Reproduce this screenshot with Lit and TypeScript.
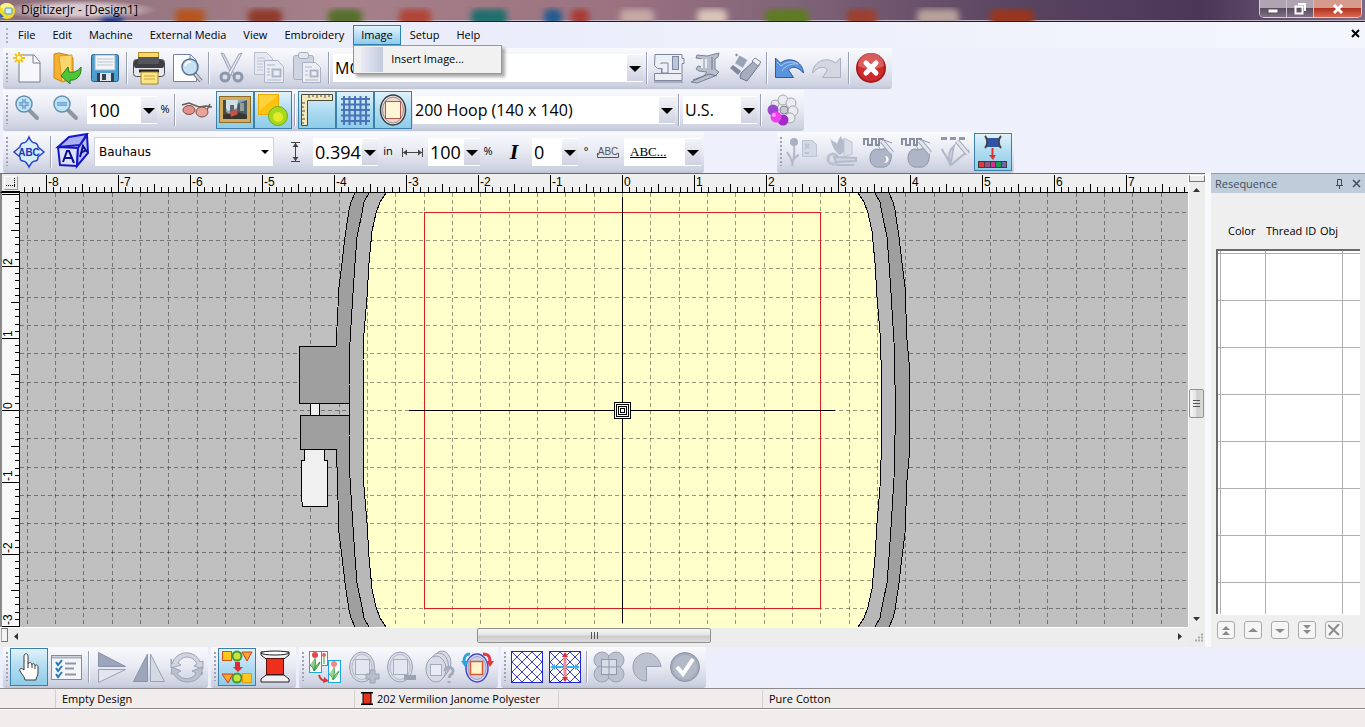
import { LitElement, html, svg, css, nothing, TemplateResult } from "lit";
import { customElement, state } from "lit/decorators.js";
import { classMap } from "lit/directives/class-map.js";

type Art = ReturnType<typeof svg>;

const G = "#9aa2b6";
const GL = "#d5d9e6";

/* ---------- toolbar icons, all drawn on a 38 x 38 field ---------- */
const icons: Record<string, Art> = {
  newDoc: svg`<path d="M9 6h15l6 7v20H9z" fill="#f6f7fb" stroke="#777c88"/><path d="M23 6v8h7" fill="#fff" stroke="#777c88"/>
    <g stroke="#f0c419" stroke-width="2"><path d="M9 3v4M9 11v4M3 9h4M11 9h4M5 5l3 3M10 10l3 3M13 5l-3 3M8 10l-3 3"/></g><circle cx="9" cy="9" r="2" fill="#fff6b0"/>`,
  open: svg`<path d="M6 5l5-1 9 2 5 3v20l-10 4-9-4z" fill="#f7b030" stroke="#c98413"/><path d="M11 7l13-1v22l-10 5z" fill="#fcd56b" stroke="#d99a20"/>
    <path d="M33 18c1 9-5 14-11 13v4l-9-8 7-9 1 5c5 1 9-1 12-5z" fill="#4fc436" stroke="#23801a"/>`,
  save: svg`<rect x="5.500" y="5.500" width="27" height="27" rx="2" fill="#4b9fd2" stroke="#2b5f8c"/><rect x="9" y="6" width="20" height="15" fill="#f2f5f8" stroke="#9db4c6"/>
    <path d="M11 10h16M11 13h16M11 16h16" stroke="#b9c4cf"/><rect x="11" y="24" width="17" height="9" fill="#38404a"/><rect x="14" y="24" width="11" height="8" fill="#dfe5ea"/><rect x="16" y="25" width="4" height="6" fill="#38404a"/>`,
  print: svg`<rect x="8.500" y="3.500" width="20" height="10" fill="#f9d96c" stroke="#b48a24"/><rect x="3.500" y="10.500" width="31" height="17" rx="3" fill="#e8e8ec" stroke="#4a4a50"/>
    <rect x="4" y="11" width="30" height="8" rx="2" fill="#3d3d44"/><rect x="8" y="8" width="21" height="7" fill="#55555c"/><path d="M9 22h20" stroke="#222" stroke-width="3"/>
    <path d="M11 23h17v12H11z" fill="#fbe484" stroke="#a88422"/><path d="M14 27h11M14 30h11" stroke="#c8a540"/>`,
  preview: svg`<path d="M5.500 5.500h17l6 6v21h-23z" fill="#fff" stroke="#6d7fa8"/><path d="M22 6v6h6" fill="#e8edf8" stroke="#6d7fa8"/>
    <path d="M26 24l7 8" stroke="#6f7784" stroke-width="4"/><path d="M27 25l6 7" stroke="#d2d6dc" stroke-width="2"/><circle cx="22" cy="18" r="8" fill="#bcdcf2" fill-opacity=".85" stroke="#5a6f8c" stroke-width="1.500"/><path d="M17 17a5 5 0 0 1 6-4" stroke="#fff" stroke-width="2" fill="none"/>`,
  cut: svg`<path d="M9 4l3 1 10 20-2 2z" fill="#d9dde6" stroke="${G}"/><path d="M30 4l-3 1-11 20 2 2z" fill="#e6e9f0" stroke="${G}"/><circle cx="13" cy="28" r="4" fill="none" stroke="#8d97ac" stroke-width="3"/><circle cx="26" cy="28" r="4" fill="none" stroke="#8d97ac" stroke-width="3"/>`,
  copy: svg`<path d="M4.500 3.500h12l6 6v16h-18z" fill="#e6e9f2" stroke="#b7bdcc"/><path d="M7 9h8M7 12h12M7 15h6M7 18h6M7 21h6" stroke="#bcc2d0"/><path d="M14.500 11.500h13l6 6v16h-19z" fill="#e9ecf4" stroke="#aeb5c6"/><path d="M17 16h8M17 31h14M17 20h3M17 23h3M17 26h3" stroke="#aeb5c6"/><rect x="22.500" y="20.500" width="8" height="7" fill="none" stroke="#aeb5c6" stroke-width="2"/>`,
  paste: svg`<rect x="5.500" y="6.500" width="20" height="24" rx="2" fill="#cfd4e0" stroke="#a4acbe"/><rect x="10.500" y="3.500" width="10" height="6" rx="2" fill="#e3e6ee" stroke="#a4acbe"/><path d="M14.500 13.500h13l5 5v15h-18z" fill="#eceef5" stroke="#a9b1c2"/><path d="M17 18h7M17 31h13M17 22h3M17 26h3" stroke="#aeb5c6"/><rect x="22.500" y="21.500" width="7" height="6" fill="none" stroke="#aeb5c6" stroke-width="2"/>`,
  machine: svg`<path d="M5 5.500h27v4h2v5h-2v17H4.500v-7h7v-5h-4l-3-3z" fill="#eceff6" stroke="#7d869c"/><rect x="22.500" y="7.500" width="6" height="13" fill="#bcc5da" stroke="#7d869c"/><path d="M11 15v-1h7v10h-6v-5" fill="none" stroke="#7d869c"/><path d="M5 24.500h26M4 33h29" stroke="#7d869c"/>`,
  embMachine: svg`<path d="M9 6l10 1 12-3-1 4-3 2v10l4 3-4 4-18 7-6-1 13-6 3-4-8-1-3-2 2-3 4 1V10l-6-1z" fill="#b9bfcd" stroke="#7b8396"/><path d="M14 10v9M18 10v9" stroke="#e8ebf2" stroke-width="2"/><path d="M24 8v13M5 31l16-6 8 2" stroke="#6d7588" fill="none"/>`,
  usb: svg`<rect x="11" y="8" width="9" height="9" fill="${G}" transform="rotate(30 15 12)"/><path d="M4 19l3-3 8 6-3 4z" fill="#7f889c"/><path d="M10 5l1 2" stroke="#7f889c" stroke-width="2"/><path d="M29 11l5 4-13 17-7-3 1-5z" fill="#a5adbf" stroke="#6d7588"/><path d="M26 12l3-3 6 4-3 4z" fill="#eef0f5" stroke="#7f889c"/>`,
  undo: svg`<path d="M5.500 9l5 5c9-7 22-2 23 10-6-7-12-7-15-3l5 7.500h-18z" fill="#5b93dc" stroke="#2c5ba6"/><path d="M7 13l4 4c6-5 12-5 17-2-8-1-14 3-16 7" fill="none" stroke="#a9caf2"/>`,
  redo: svg`<path d="M32.500 9l-5 5c-9-7-22-2-23 10 6-7 12-7 15-3l-5 7.500h18z" fill="#d3d7e2" stroke="#a7afc0"/>`,
  stop: svg`<circle cx="19" cy="19" r="15" fill="#a31c1f"/><circle cx="19" cy="19" r="13" fill="#cf2b2c"/><path d="M6 17a13 13 0 0 1 26 0c-8 4-18 4-26 0z" fill="#e0706c" fill-opacity=".75"/><path d="M14 14l10 10M24 14L14 24" stroke="#fff" stroke-width="5" stroke-linecap="round"/>`,
  zoomIn: svg`<path d="M19 19l8 8" stroke="#8e969f" stroke-width="4" stroke-linecap="round"/><circle cx="14" cy="13" r="8" fill="#bfe3f7" stroke="#6a8fae" stroke-width="1.500"/><path d="M14 8v10M9 13h10" stroke="#1f6fb0" stroke-width="3"/><path d="M14 8v10M9 13h10" stroke="#fff"/>`,
  zoomOut: svg`<path d="M20 19l8 8" stroke="#8e969f" stroke-width="4" stroke-linecap="round"/><circle cx="14" cy="13" r="8" fill="#bfe3f7" stroke="#6a8fae" stroke-width="1.500"/><path d="M9 13h10" stroke="#1f6fb0" stroke-width="3"/><path d="M9 13h10" stroke="#fff"/>`,
  glasses: svg`<path d="M4 14l7-2 10 4 7-1 6 1M32 13l-3 6" fill="none" stroke="#6b5a52" stroke-width="1.500"/><ellipse cx="11" cy="19" rx="6" ry="4.500" fill="#e2908a" stroke="#7a5048"/><ellipse cx="24" cy="21" rx="6" ry="5" fill="#e6a49b" stroke="#7a5048"/>`,
  picture: svg`<rect x="3" y="5" width="32" height="27" fill="#d3ad5e"/><rect x="3.500" y="5.500" width="31" height="26" fill="none" stroke="#8b6a2b"/><rect x="7" y="9" width="24" height="19" fill="#8fa4ab"/><path d="M7 9h3v12l4 3v4H7z" fill="#4e4a40"/><path d="M21 13l10-4v19H21z" fill="#4c5c62"/><path d="M10 9h12l-1 8-9 3-2-3z" fill="#cfe0e8"/><path d="M14 14h4v7h-4z" fill="#5c6670"/><path d="M7 24l14-3 10 3v4H7z" fill="#3c342e"/><path d="M14 21l6-3 2 5-7 3z" fill="#c4534a"/><path d="M24 12h4v8h-4z" fill="#93a099"/>`,
  shapes: svg`<rect x="4.500" y="3.500" width="20" height="20" fill="#ffc20e" stroke="#efac00"/><path d="M5 4h19L5 20z" fill="#ffd850" fill-opacity=".7"/><circle cx="24" cy="25" r="9.500" fill="#a6d81e" stroke="#6fae18"/><circle cx="24" cy="26" r="5" fill="#f2ee2e" fill-opacity=".8"/>`,
  ruler: svg`<path d="M3.500 3.500h31v6h-25v25h-6z" fill="#f4e9bd" stroke="#4e4a3a"/><path d="M11 4v3M15 4v2M19 4v3M23 4v2M27 4v3M31 4v2M4 12h3M4 16h2M4 20h3M4 24h2M4 28h3M4 32h2" stroke="#4e4a3a"/>`,
  gridIcon: svg`<path d="M8 5v29M13.500 5v29M19 5v29M24.500 5v29M30 5v29M5 8h29M5 13.500h29M5 19h29M5 24.500h29M5 30h29" stroke="#4a72b8" stroke-width="2"/>`,
  hoop: svg`<ellipse cx="19" cy="19" rx="12.500" ry="15" fill="#eef0f2" stroke="#3a3a3e" stroke-width="1.500"/><ellipse cx="19" cy="19" rx="10.500" ry="13" fill="#f7d4ca" stroke="#8b8b90"/><rect x="11.500" y="10.500" width="15" height="17" fill="#fff6d8" stroke="#b4584e"/>`,
  flower: svg`<g fill="#e9ebf0" stroke="#a4a8b0"><circle cx="19" cy="9" r="5"/><circle cx="27" cy="12" r="5"/><circle cx="29" cy="20" r="5"/><circle cx="26" cy="27" r="5"/><circle cx="11" cy="13" r="4"/></g><circle cx="19" cy="29" r="5.500" fill="#a02bc8"/><circle cx="9" cy="19" r="5.500" fill="#9b46cf"/><circle cx="12" cy="26" r="5.500" fill="#f13df0"/><circle cx="10" cy="24" r="2" fill="#ffa0ff"/><circle cx="20" cy="19" r="4" fill="#c9cbd2" stroke="#85888f"/>`,
  abcDiamond: svg`<path d="M19 4c2 5 4 6 6 6s3 3 3 4l6 5-6 5c0 2-1 4-3 4s-4 2-6 6c-2-4-4-6-6-6s-3-2-3-4l-6-5 6-5c0-1 1-4 3-4s4-1 6-6z" fill="#d4eefb" stroke="#2a44c8" stroke-width="1.500"/><text x="19" y="23" text-anchor="middle" class="mono">ABC</text>`,
  cube: svg`<path d="M4 14L15 4l18-3-7 11z" fill="#a9b0f4" stroke="#1818c8" stroke-width="2"/><path d="M4 14l20 1-1 18-17-1z" fill="#dbe1ff" stroke="#1616c8" stroke-width="2"/><path d="M24 15l9-13 1 18-11 13z" fill="#b9c2fa" stroke="#1616c8" stroke-width="2"/><path d="M9 29l4-11h2l5 12M11 25h7" stroke="#0c0c90" stroke-width="2"/><path d="M26 24l3-11 4 6M27 20l5-3" stroke="#0c0c90" stroke-width="2"/>`,
  heightI: svg`<path d="M15 9.500h9M15 28.500h9M19.500 10v18" stroke="#444" fill="none"/><path d="M19.500 10l-3 4h6zM19.500 28l-3-4h6z" fill="#444"/>`,
  widthI: svg`<path d="M9.500 15v9M29.500 15v9M10 19.500h19" stroke="#444" fill="none"/><path d="M10 19.500l4-3v6zM29 19.500l-4-3v6z" fill="#444"/>`,
  italic: svg`<text x="19" y="26" text-anchor="middle" class="ital">I</text>`,
  abcLine: svg`<text x="19" y="22" text-anchor="middle" class="abc">ABC</text><path d="M8.500 20v4.500h21V20" fill="none" stroke="#555"/>`,
  tulipDoc: svg`<circle cx="10" cy="9" r="4" fill="#a8b0c2"/><path d="M10 13c1 7 0 12-2 20M3 19c2 3 4 6 5 10 2-4 4-6 7-7" stroke="#b3bac9" stroke-width="2" fill="none"/><path d="M18.500 7.500h10l4 4v12h-14z" fill="${GL}" stroke="#bcc3d2"/><path d="M21 11l4 4M25 11l-4 5M21 20h4" stroke="#bcc3d2" stroke-width="2"/>`,
  tulipRuler: svg`<path d="M8 5c2 4 5 3 7 6 1-3 2-6 4-8 1 4 3 5 7 5-1 8-5 12-8 14-5-3-8-9-10-17z" fill="#b4bbcb"/><path d="M22 5l8 4v12l-8 3z" fill="#d9dde7" stroke="#bcc3d2"/><circle cx="11" cy="26" r="5" fill="none" stroke="#bac1cf" stroke-width="3"/><path d="M12 24l22 1v3l-20 1zM14 32h18" stroke="#b4bbca" fill="#cfd4e0" stroke-width="2"/>`,
  appleHole: svg`<path d="M4 12V6h4v6h4V6h4v6h3V6h4v5" fill="none" stroke="#878fa1" stroke-width="2"/><path d="M20 17c8-4 13 2 11 9-1 6-5 9-11 8-6 1-10-3-10-9s4-11 10-8z" fill="#aeb5c6" stroke="#8e96a9"/><path d="M22 8l10 12" stroke="#98a0b2" stroke-width="5"/><path d="M22 8l10 12" stroke="#e2e5ed" stroke-width="3"/><path d="M25 23c5 0 5 7-1 7 3-2 3-4 1-7z" fill="#fff"/><path d="M20 17c0-2-1-3-2-4M24 7l8 3" stroke="#8e96a9"/>`,
  apple: svg`<path d="M4 12V6h4v6h4V6h4v6h3V6h4v5" fill="none" stroke="#878fa1" stroke-width="2"/><path d="M20 17c8-4 13 2 11 9-1 6-5 9-11 8-6 1-10-3-10-9s4-11 10-8z" fill="#aeb5c6" stroke="#8e96a9"/><path d="M22 8l10 12" stroke="#98a0b2" stroke-width="5"/><path d="M22 8l10 12" stroke="#e2e5ed" stroke-width="3"/><path d="M20 17c0-2-1-3-2-4M24 7l8 3" stroke="#8e96a9"/>`,
  leafDash: svg`<path d="M5 5.500h24" stroke="#9199ab" stroke-width="3" stroke-dasharray="6 3"/><path d="M6 16c2 6 6 8 8 15 3-7 2-13 4-18-5 4-6 10-4 18M33 17L15 32" stroke="#b0b7c7" stroke-width="2" fill="none"/><path d="M21 8l11 13" stroke="#98a0b2" stroke-width="5"/><path d="M21 8l11 13" stroke="#e2e5ed" stroke-width="3"/>`,
  spoolColors: svg`<rect x="13" y="5" width="12" height="9" fill="#2f55a8"/><path d="M11 3c3 3 3 9 0 12M27 3c-3 3-3 9 0 12" stroke="#444" stroke-width="2" fill="none"/><path d="M18.500 15v8" stroke="#d83434" stroke-width="2"/><path d="M15 22h7l-3 5z" fill="#d83434"/><rect x="4" y="28" width="29" height="7" fill="#3c3c44"/><path d="M5 29h5v5H5z" fill="#e03a3a"/><path d="M11 29h5v5h-5z" fill="#a04a8c"/><path d="M17 29h4v5h-4z" fill="#d8308c"/><path d="M22 29h5v5h-5z" fill="#1f9a5c"/><path d="M28 29h4v5h-4z" fill="#7464a8"/>`,
  hand: svg`<path d="M14 20V8c0-3 4-3 4 0v8c0-2 4-2 4 1 0-2 3-2 3 1 1-2 3-1 3 1v6c0 3-2 4-2 7H15c0-3-3-5-5-9-1-2 1-4 4-1z" fill="#fdfdfd" stroke="#3c3c3c"/><path d="M18 16v4M22 17v3M25 18v3" stroke="#3c3c3c"/>`,
  checklist: svg`<rect x="3.500" y="7.500" width="30" height="24" fill="#f3f5f9" stroke="#868c98"/><path d="M4 9.500h29" stroke="#a9afba" stroke-width="2"/><path d="M17 15.500h11M17 20.500h9M17 26.500h11" stroke="#8d95a5" stroke-width="2"/><path d="M8 14l2 3 4-5M8 20l2 3 4-5M8 26l2 3 4-5" fill="none" stroke="#2478bd" stroke-width="2"/>`,
  flipV: svg`<path d="M6.500 4.500v14h27z" fill="#9ca5b9" stroke="#8992a8"/><path d="M6.500 21.500v13l27-13z" fill="#e3e6ee" stroke="#98a1b4"/>`,
  flipH: svg`<path d="M17.500 6v27.500H3.500z" fill="#9ca5b9" stroke="#8992a8"/><path d="M20.500 6v27.500h14z" fill="#d5d9e4" stroke="#98a1b4"/>`,
  rotate: svg`<path d="M4 16C8 2 27 1 32 14l3-1v8l-9-3 3-2c-4-9-15-9-19-1l3 2-10 3V11z" fill="#d0d5e0" stroke="#9ca4b5"/><path d="M34 24c-4 13-23 13-28 2l-3 0 1-7 9 4-4 2c4 7 15 8 19 0l-4-2 10-4v8z" fill="#b9c0ce" stroke="#9ca4b5"/>`,
  sortShapes: svg`<rect x="4.500" y="3.500" width="9" height="9" fill="#fcc81c" stroke="#d8501c"/><circle cx="19" cy="8" r="4.500" fill="#c9e33c" stroke="#3f9a38" stroke-width="2"/><path d="M24 4h10l-5 9z" fill="#fba82c" stroke="#d03a28"/><path d="M17 14h5v5h3l-5 5-5-5h2z" fill="#e12b32"/><path d="M4 26h11l-5 9z" fill="#fba82c" stroke="#d03a28"/><circle cx="19" cy="30" r="4.500" fill="#c9e33c" stroke="#3f9a38" stroke-width="2"/><rect x="24.500" y="25.500" width="9" height="9" fill="#fcc81c" stroke="#e09a1c"/>`,
  spoolRed: svg`<path d="M5 4h28v3l-5 4H10L5 7z" fill="#f2f2f2" stroke="#222"/><ellipse cx="19" cy="5" rx="14" ry="2" fill="#fff" stroke="#222"/><rect x="10.500" y="10.500" width="17" height="16" fill="#ee2f1b" stroke="#5a1008"/><path d="M5 34h28v-3l-5-4H10l-5 4z" fill="#f2f2f2" stroke="#222"/>`,
  tulips: svg`<rect x="3.500" y="3.500" width="12" height="21" fill="#fff" stroke="#1ca7dc"/><rect x="15.500" y="3.500" width="6" height="14" fill="#fff" stroke="#1ca7dc"/><rect x="22.500" y="12.500" width="12" height="22" fill="#fff" stroke="#1ca7dc"/><circle cx="9" cy="7" r="3" fill="#e04c4c"/><path d="M9 10c1 5 0 9-1 13 3-3 5-6 6-9-3 2-5 5-6 9-1-3-2-5-4-6" stroke="#2f9a3c" fill="#8fce8a"/><circle cx="18" cy="7" r="2" fill="#e4655c"/><path d="M18 9v7" stroke="#2f9a3c"/><circle cx="28" cy="16" r="3" fill="#e98a84"/><path d="M28 19c1 5 0 9-1 13 3-3 5-6 6-9-3 2-5 5-6 9-1-3-2-5-4-6" stroke="#47a652" fill="#9dd69a"/><path d="M13 27c1 4 3 6 7 6" stroke="#d8343c" stroke-width="2" fill="none"/><path d="M18 29l5 4-6 2z" fill="#d8343c"/>`,
  hoopAdd: svg`<ellipse cx="18" cy="19" rx="12.500" ry="15" fill="#d7dbe5" stroke="#9aa2b4"/><ellipse cx="18" cy="19" rx="10" ry="12.500" fill="#dfe3ec" stroke="#b2b9c8"/><rect x="11.500" y="11.500" width="14" height="15" fill="#e3e7f2" stroke="#a4acbf"/><path d="M26 26v-4h5v4h4v5h-4v4h-5v-4h-4v-5z" fill="#b7bdcb" stroke="#99a1b2"/>`,
  hoopRemove: svg`<ellipse cx="18" cy="19" rx="12.500" ry="15" fill="#d7dbe5" stroke="#9aa2b4"/><ellipse cx="18" cy="19" rx="10" ry="12.500" fill="#dfe3ec" stroke="#b2b9c8"/><rect x="11.500" y="11.500" width="14" height="15" fill="#e3e7f2" stroke="#a4acbf"/><rect x="22" y="27" width="12" height="5" fill="#9aa2b4"/>`,
  hoopHelp: svg`<g fill="#d7dbe5" stroke="#9aa2b4"><ellipse cx="22" cy="15" rx="9" ry="12"/><ellipse cx="19" cy="18" rx="9.500" ry="13"/><ellipse cx="16" cy="21" rx="10" ry="13"/></g><rect x="10.500" y="16.500" width="11" height="11" fill="#e9ecf4" stroke="#a4acbf"/><path d="M25 23c0-5 8-5 8 0 0 4-4 3-4 7M29 33v2" stroke="#a3abbb" stroke-width="3" fill="none"/>`,
  hoopRotate: svg`<ellipse cx="19" cy="20" rx="11" ry="14" fill="#d9dcf2" stroke="#4a48c4" stroke-width="1.500"/><ellipse cx="19" cy="20" rx="9" ry="11.500" fill="#ccd0e0" stroke="#9a9fc0"/><rect x="12.500" y="13.500" width="12" height="13" fill="#fff4cc" stroke="#d8583c" stroke-width="1.500"/><path d="M12 6C7 6 6 9 6 14" fill="none" stroke="#25a6dc" stroke-width="3"/><path d="M3 13h8l-4 6z" fill="#25a6dc"/><path d="M25 6c6 0 7 3 7 8" fill="none" stroke="#e03a44" stroke-width="3"/><path d="M28 13h8l-4 6z" fill="#e03a44"/>`,
  hatch: svg`<rect x="3.500" y="3.500" width="31" height="31" fill="#fff" stroke="#2226d0"/><path d="M4 14L14 4M4 24L24 4M4 34L34 4M14 34l20-20M24 34l10-10M4 24l10 10M4 14l20 20M4 4l30 30M14 4l20 20M24 4l10 10" stroke="#3a3ec8"/>`,
  hatchMove: svg`<rect x="3.500" y="3.500" width="31" height="31" fill="#fff" stroke="#2226d0"/><path d="M4 14L14 4M4 24L24 4M4 34L34 4M14 34l20-20M24 34l10-10M4 24l10 10M4 14l20 20M4 4l30 30M14 4l20 20M24 4l10 10" stroke="#3a3ec8"/><path d="M6 19h26" stroke="#38b0ee" stroke-width="2"/><path d="M4 19l5-3v6zM34 19l-5-3v6z" fill="#38b0ee"/><path d="M19 6v26" stroke="#ee8a90" stroke-width="3"/><path d="M19 4l-3 5h6zM19 34l-3-5h6z" fill="#e02a34"/>`,
  clover: svg`<g fill="#bdc3d0" stroke="#9aa2b4"><circle cx="12" cy="12" r="8"/><circle cx="26" cy="12" r="8"/><circle cx="12" cy="26" r="8"/><circle cx="26" cy="26" r="8"/></g><rect x="11.500" y="11.500" width="15" height="15" fill="#d9dde7" stroke="#8f97aa"/><path d="M19 12v14M12 19h14" stroke="#8f97aa"/>`,
  pie: svg`<path d="M18.500 18.500V33C10 33 5 26 5 19 5 10 12 5 19 5c8 0 13 7 14 13.500z" fill="#bcc2cf" stroke="#989fb1"/>`,
  tick: svg`<circle cx="19" cy="19" r="14.500" fill="#a4abbb" stroke="#8c94a6"/><circle cx="19" cy="19" r="12" fill="#b3b9c7"/><path d="M11 19l6 7 10-15" fill="none" stroke="#fff" stroke-width="4"/>`,
};

const around = (count: number) => Array.from({ length: count * 2 + 1 }, (_, i) => i - count);
const range = (from: number, to: number) => Array.from({ length: to - from + 1 }, (_, i) => i + from);

/* origin of the design, measured inside the canvas */
const OX = 602;
const OY = 217;

const innerEdge = [[236, 0], [242, 9], [246, 20], [250, 38], [253, 70], [255, 104], [258, 140], [259, 167]];
const middleEdge = [[253, 0], [258, 9], [260, 20], [265, 44], [267, 70], [269, 100], [272, 149], [273, 192]];
const outerEdge = [[267, 0], [271, 9], [273, 17], [277, 44], [280, 70], [283, 94], [285, 147], [287, 169]];

const side = (pts: number[][], dir: number) => {
  const top = pts.map(([x, y]) => [OX + dir * x, y]);
  const low = [...pts].reverse().map(([x, y]) => [OX + dir * x, OY * 2 - y]);
  return [...top, ...low];
};
const poly = (pts: number[][]) => pts.map((p) => p.join(",")).join(" ");
const band = (a: number[][], b: number[][], dir: number) => poly([...side(a, dir), ...side(b, dir).reverse()]);

@customElement("app-root")
export class AppRoot extends LitElement {
  @state() private menuOpen = true;

  static styles = css`
    :host { display: flex; flex-direction: column; min-height: 100vh; overflow: hidden; background: #eef0fb; color: #000; font: 11px/16px "Open Sans", "Noto Sans", sans-serif; }
    * { box-sizing: border-box; }
    button, select { font: inherit; color: inherit; }
    button { padding: 0; border: 0; background: none; }
    svg { display: block; }

    .title { position: relative; display: flex; height: 22px; flex: none; overflow: hidden; border-bottom: 1px solid #241a30; background: linear-gradient(90deg, #8d6f7b, #a58089 25%, #9c7280 45%, #806478 58%, #584360 75%, #4a3758 88%, #7d6a85); box-shadow: inset 0 -1px #c5b7c4; }
    .glass { position: absolute; inset: 0; width: 100%; height: 100%; }
    .caption { position: relative; display: flex; align-items: center; gap: 4px; height: 20px; padding-right: 20px; font-size: 12px; background: radial-gradient(closest-side, #e9dfe2cc 50%, #e9dfe200); }
    .winbtns { position: relative; display: flex; margin: 0 3px 0 auto; height: 18px; border: 1px solid #d6cdd8; border-top: 0; border-radius: 0 0 5px 5px; overflow: hidden; }
    .winbtns button { display: grid; place-items: center; width: 27px; border-right: 1px solid #c9c0cc; background: linear-gradient(#b0a3b2 45%, #5b4c62 50%, #7e7085); }
    .winbtns .x { width: 47px; border: 0; background: linear-gradient(#d69a8c 45%, #b03322 50%, #d96b4e); }

    .menubar { position: relative; display: flex; align-items: center; gap: 1px; height: 26px; flex: none; padding-left: 10px; background: linear-gradient(90deg, #e6e9f8, #f3f6fd); }
    .menubar::before { content: ""; position: absolute; left: 6px; top: 6px; height: 15px; border-left: 2px dotted #a9aec0; }
    .item { position: relative; }
    .menubtn { height: 20px; padding: 0 7px; border: 1px solid transparent; white-space: nowrap; }
    .menubtn.on { border-color: #2c82b4; background: linear-gradient(#e2f3fb, #8dcbee); }
    .drop { position: absolute; left: 0; top: 20px; z-index: 5; display: flex; width: 149px; height: 29px; padding-left: 7px; border: 1px solid #979797; background: #f1f1f1; box-shadow: 3px 3px 3px #0005; }
    .drop::before { content: ""; width: 22px; margin: 1px 0; background: linear-gradient(90deg, #e9ebf5, #c3cadd); }
    .drop button { padding: 0 8px 2px; }
    .mdi { margin: 0 5px 4px auto; }

    .rows { display: flex; flex-direction: column; gap: 1px; flex: none; }
    .row { display: flex; padding-left: 3px; }
    .bar { display: flex; height: 41px; padding: 1px 2px 2px 0; border-radius: 0 0 3px 3px; background: linear-gradient(#f9fafd, #e9ebf4 45%, #cdd1e0 92%, #bfc4d6); }
    .grip { width: 7px; margin: 4px 0 5px; background: linear-gradient(90deg, transparent 3px, #9da2b6 3px, #9da2b6 5px, transparent 5px); mask: repeating-linear-gradient(#000 0 2px, transparent 2px 4px); }
    .tool { display: grid; place-items: center; width: 38px; height: 38px; flex: none; }
    .tool svg { width: 38px; height: 38px; }
    .tool.on { background: linear-gradient(#e4f3fa, #b4def2 45%, #8ccbe8); box-shadow: inset 0 0 0 1px #3a80aa; }
    .small { width: 30px; }
    .wide { width: 36px; }
    .small svg { margin: 0 -4px; }
    .sep { width: 6px; height: 32px; margin-top: 3px; background: linear-gradient(90deg, transparent 2px, #9aa0b8 2px, #9aa0b8 3px, #fff 3px, #fff 4px, transparent 4px); }
    .unit { width: 14px; height: 38px; line-height: 36px; text-align: center; }
    .inch { width: 18px; }
    .row .gap { width: 73px; }
    .mono { font: bold 10px "Liberation Sans", sans-serif; fill: #1c34c0; }
    .ital { font: italic bold 22px "Liberation Serif", serif; fill: #000; }
    .abc { font: 10px "Liberation Sans", sans-serif; fill: #555; }

    .combo { display: grid; height: 28px; margin: 5px 1px; background: #fff; font-size: 16px; line-height: 26px; }
    .combo > * { grid-area: 1 / 1; }
    .combo select { width: 100%; min-width: 0; height: 100%; padding: 0 17px 0 2px; border: 0; background: none; appearance: none; outline: 0; }
    .combo svg { justify-self: end; width: 16px; height: 26px; margin: 1px 0; background: linear-gradient(#f3f4f9, #cfd3e0); pointer-events: none; }
    .digits { font-size: 18px; }
    .w-machine { width: 310px; }
    .w-zoom { width: 70px; }
    .w-hoop { width: 262px; }
    .w-units { width: 74px; }
    .w-height { width: 65px; }
    .w-pct { width: 52px; }
    .w-angle { width: 46px; }
    .w-base { width: 77px; font: 13px/24px "Liberation Serif", serif; text-decoration: underline; }
    .w-base select { padding-left: 6px; }
    .w-font { width: 180px; height: 30px; margin: 4px 2px; border: 1px solid #d0d4e2; font: 12px "DejaVu Sans", sans-serif; }
    .w-font svg { background: none; }
    .w-font select { padding-left: 4px; }

    .work { display: flex; flex: 1; min-height: 0; }
    .editor { display: grid; grid-template: 19px minmax(0, 1fr) 20px / 20px minmax(0, 1fr) 17px; flex: 1; min-width: 0; border-top: 1px solid #6b6b70; background: #ececec; }
    .editor svg { width: 100%; height: 100%; }
    .corner { display: grid; place-items: center; border-left: 2px solid #8a8a8a; border-bottom: 2px solid #000; }
    .corner svg { width: 14px; height: 14px; border: 1px solid #999; border-top-color: #fff; border-left-color: #fff; }
    .ruler { min-width: 0; min-height: 0; background: #efefef; overflow: hidden; font: 12px "Liberation Sans", sans-serif; }
    .ruler.top { border-bottom: 1px solid #000; }
    .ruler.left { grid-row: 2; border-left: 2px solid #8a8a8a; border-right: 1px solid #000; background: #f8f8f8; }
    .canvas { min-width: 0; min-height: 0; background: #c0c0c0; overflow: hidden; }
    .crisp { shape-rendering: crispEdges; }
    .vs, .hs { display: flex; background: #ededed; }
    .vs { flex-direction: column; grid-row: 1 / 3; grid-column: 3; border-left: 1px solid #fff; }
    .split { height: 7px; margin-top: 1px; flex: none; border: 1px solid #777; border-top-color: #fff; }
    .hsplit { width: 7px; margin: 0 0 3px 1px; border: 1px solid #777; border-left-color: #aaa; background: #f4f4f4; }
    .hs { grid-row: 3; grid-column: 1 / 3; height: 18px; border-top: 1px solid #fff; }
    .arrow { display: grid; place-items: center; width: 17px; height: 17px; flex: none; }
    .vs .arrow { width: 15px; }
    .arrow svg { width: 7px; height: 7px; }
    .thumb { display: grid; place-items: center; flex: none; border: 1px solid #909090; border-radius: 2px; }
    .hs .thumb { width: 234px; height: 15px; background: linear-gradient(#f6f6f6, #e3e3e3 48%, #cbcbcb 52%, #dcdcdc); }
    .vs .thumb { width: 15px; height: 29px; background: linear-gradient(90deg, #f6f6f6, #e3e3e3 48%, #cbcbcb 52%, #dcdcdc); }
    .editor .thumb svg { width: 9px; height: 9px; }
    .fill-a { flex: 191; }
    .fill-b { flex: 194; }
    .size { grid-row: 3; grid-column: 3; align-self: center; justify-self: end; }
    .editor .size svg { width: 11px; height: 11px; }

    .panel { display: flex; flex-direction: column; width: 160px; border-left: 6px solid #f8f9fd; background: #efefef; }
    .phead { display: flex; align-items: center; gap: 9px; height: 20px; padding: 0 4px; border-top: 1px solid #93a0ae; background: #bfcddb; color: #3d4d60; font-size: 11px; }
    .phead b { flex: 1; font-weight: 400; }
    .heads { display: flex; padding: 30px 0 0 17px; height: 56px; }
    .heads :nth-child(1) { width: 38px; }
    .heads :nth-child(2) { width: 54px; }
    .list { flex: 1 1 0; min-height: 0; margin: 0 5px; overflow: hidden; border: solid #6a6a6a; border-width: 2px 0 0 2px; background: #fff; box-shadow: 0 1px #fff; }
    .list table { width: 100%; border-collapse: collapse; table-layout: fixed; }
    .list td { height: 47px; padding: 0; border: 1px solid #b0b0b0; border-right: 0; }
    .list .lead td { height: 2px; border-top: 0; }
    .c0 { width: 2px; } .c1 { width: 45px; } .c3 { width: 18px; }
    .list td:first-child { border-left: 0; }
    .pbtns { display: flex; gap: 9px; padding: 7px 6px 8px; }
    .pbtns button { display: grid; place-items: center; width: 18px; height: 18px; border: 1px solid #a9a9a9; border-radius: 3px; background: #f5f5f5; }

    .bottom { display: flex; gap: 3px; height: 41px; flex: none; padding-left: 3px; background: #eceffb; }
    .status { display: flex; align-items: center; height: 21px; flex: none; border-top: 1px solid #8b8b8f; border-bottom: 1px solid #8b8b8f; background: #f0edec; }
    .cell { display: flex; align-items: center; gap: 4px; height: 18px; padding-left: 6px; border-left: 1px solid #d4d0cf; white-space: nowrap; }
    .s0 { width: 55px; border: 0; } .s1 { width: 299px; } .s2, .s3 { width: 204px; } .s4 { flex: 1; }
    .foot { height: 18px; flex: none; background: #f0edec; border-top: 1px solid #fff; }
  `;

  private tool(name: string, label: string, on = false, extra = ""): TemplateResult {
    return html`<button class=${classMap({ tool: true, on, small: extra === "small", wide: extra === "wide" })} title=${label} aria-label=${label}>
      <svg viewBox="0 0 38 38" fill="none">${icons[name]}</svg></button>`;
  }

  private combo(cls: string, label: string, values: string[], small = false): TemplateResult {
    return html`<label class="combo ${cls}"><select aria-label=${label}>${values.map((v) => html`<option>${v}</option>`)}</select>
      <svg viewBox="0 0 16 26">${small ? svg`<path d="M4 11h8l-4 4z"/>` : svg`<path d="M2 11h12l-6 6z"/>`}</svg></label>`;
  }

  private get sep() { return html`<span class="sep"></span>`; }
  private get grip() { return html`<span class="grip"></span>`; }

  private renderTitle() {
    const blobs: [number, number, string][] = [[112, 22, "#2c3f8f"], [190, 30, "#b5541f"], [265, 34, "#8f3a2c"], [345, 34, "#55702a"], [415, 32, "#b04538"], [489, 36, "#1f6f6c"], [553, 18, "#235c92"], [580, 18, "#a83a34"], [637, 34, "#c4a9a6"], [712, 30, "#d8c4ba"], [787, 44, "#5e7a24"], [862, 30, "#9c3f2e"], [938, 42, "#b8a19c"], [1012, 44, "#98351f"]];
    return html`<header class="title">
      <svg class="glass" aria-hidden="true"><defs><filter id="soft"><feGaussianBlur stdDeviation="3"/></filter></defs>
        <g filter="url(#soft)">${blobs.map(([x, w, c]) => svg`<rect x=${x - w / 2} y="9" width=${w} height="16" rx="6" fill=${c}/>`)}</g></svg>
      <div class="caption"><svg width="17" height="18" viewBox="0 0 17 18"><circle cx="7" cy="10" r="8" fill="#f3d92c"/><path d="M0 5a9 9 0 0 1 14 1l-8 6z" fill="#fff38a"/><rect x="5" y="7" width="7" height="6" rx="1" fill="#d8ecf6" stroke="#4a9ac4"/><path d="M0 12l4 4h-4z" fill="#2c6ab0"/></svg>
        <span>DigitizerJr - [Design1]</span></div>
      <div class="winbtns">
        <button aria-label="Minimize"><svg width="12" height="12"><rect x="1" y="6" width="10" height="4" fill="#fff" stroke="#55505c"/></svg></button>
        <button aria-label="Restore"><svg width="12" height="12"><path d="M4 1h7v7M1.500 3.500h7v7h-7z" fill="none" stroke="#fff" stroke-width="2"/></svg></button>
        <button class="x" aria-label="Close"><svg width="12" height="12"><path d="M2 2l8 8M10 2l-8 8" stroke="#fff" stroke-width="3"/></svg></button>
      </div></header>`;
  }

  private renderMenu() {
    return html`<nav class="menubar">
      ${["File", "Edit", "Machine", "External Media", "View", "Embroidery", "Image", "Setup", "Help"].map((m) => {
        const image = m === "Image";
        const open = image && this.menuOpen;
        return html`<div class="item"><button class=${classMap({ menubtn: true, on: open })} aria-expanded=${image ? String(open) : nothing}
          @click=${() => { if (image) this.menuOpen = !this.menuOpen; }}>${m}</button>
          ${open ? html`<div class="drop"><button>Insert Image...</button></div>` : nothing}</div>`;
      })}
      <button class="mdi" aria-label="Close design"><svg width="9" height="9"><path d="M1 1l7 7M8 1L1 8" stroke="#000" stroke-width="2"/></svg></button>
    </nav>`;
  }

  private renderToolbars() {
    return html`<div class="rows">
      <div class="row"><div class="bar">${this.grip}
        ${this.tool("newDoc", "New")}${this.tool("open", "Open")}${this.tool("save", "Save")}${this.sep}
        ${this.tool("print", "Print")}${this.tool("preview", "Print Preview")}${this.sep}
        ${this.tool("cut", "Cut")}${this.tool("copy", "Copy")}${this.tool("paste", "Paste")}${this.sep}
        ${this.combo("w-machine", "Machine", ["MC200E"])}${this.sep}
        ${this.tool("machine", "Send to machine")}${this.tool("embMachine", "Embroidery unit")}${this.tool("usb", "Write to media")}${this.sep}
        ${this.tool("undo", "Undo")}${this.tool("redo", "Redo")}${this.sep}${this.tool("stop", "Stop")}
      </div></div>
      <div class="row"><div class="bar">${this.grip}
        ${this.tool("zoomIn", "Zoom In")}${this.tool("zoomOut", "Zoom Out")}${this.combo("w-zoom digits", "Zoom", ["100"])}<span class="unit">%</span>${this.sep}
        ${this.tool("glasses", "Realistic Preview")}${this.tool("picture", "Show Image", true)}${this.tool("shapes", "Show Vectors", true)}${this.sep}
        ${this.tool("ruler", "Rulers", true)}${this.tool("gridIcon", "Grid", true)}${this.tool("hoop", "Show Hoop", true)}
        ${this.combo("w-hoop", "Hoop", ["200 Hoop (140 x 140)"])}${this.sep}${this.combo("w-units", "Units", ["U.S.", "Metric"])}${this.sep}${this.tool("flower", "Color wheel")}
      </div></div>
      <div class="row"><div class="bar">${this.grip}
        ${this.tool("abcDiamond", "Monogram")}${this.sep}${this.tool("cube", "Lettering")}
        ${this.combo("w-font", "Font", ["Bauhaus"], true)}
        ${this.tool("heightI", "Letter height", false, "wide")}${this.combo("w-height digits", "Height", ["0.394"])}<span class="unit inch">in</span>
        ${this.tool("widthI", "Letter width", false, "small")}${this.combo("w-pct digits", "Width", ["100"])}<span class="unit">%</span>
        ${this.tool("italic", "Italic", false, "wide")}${this.combo("w-angle digits", "Italic angle", ["0"])}<span class="unit">°</span>
        ${this.tool("abcLine", "Baseline", false, "small")}${this.combo("w-base", "Baseline type", ["ABC..."])}
      </div><span class="gap"></span><div class="bar">${this.grip}
        ${this.tool("tulipDoc", "Auto Digitize")}${this.tool("tulipRuler", "Prepare artwork")}${this.tool("appleHole", "Fill with holes")}${this.tool("apple", "Fill without holes")}${this.tool("leafDash", "Centerline")}${this.tool("spoolColors", "Match thread colors", true)}
      </div></div>
    </div>`;
  }

  private renderCanvas() {
    return html`<div class="canvas"><svg class="crisp" role="img" aria-label="Design canvas">
      <polygon points=${poly([...side(innerEdge, -1), ...side(innerEdge, 1).reverse()])} fill="#ffffcc"/>
      <g stroke="#000" stroke-opacity=".4" stroke-dasharray="4 3">
        ${around(60).map((i) => svg`<line x1=${Math.round(OX + i * 28.346) + 0.5} y1="0" x2=${Math.round(OX + i * 28.346) + 0.5} y2="100%"/>`)}
        ${around(30).map((i) => svg`<line x1="0" y1=${Math.round(OY + i * 28.346) + 0.5} x2="100%" y2=${Math.round(OY + i * 28.346) + 0.5}/>`)}
      </g>
      <polygon points=${band(innerEdge, middleEdge, 1)} fill="#b8b8b8"/><polygon points=${band(innerEdge, middleEdge, -1)} fill="#b8b8b8"/>
      <polygon points=${band(middleEdge, outerEdge, 1)} fill="#9f9f9f"/>
      <polygon points="335,0 331,9 329,17 325,44 322,70 319,94 317,154 279,154 279,210 329,210 329,192 330,149 333,100 335,70 337,44 342,20 344,9 349,0" fill="#9f9f9f"/>
      <polygon points="335,434 331,425 329,417 325,390 322,364 319,340 316,256 280,256 280,222 329,222 329,242 330,285 333,334 335,364 337,390 342,414 344,425 349,434" fill="#9f9f9f"/>
      <g fill="none" stroke="#000">
        ${[1, -1].map((d) => svg`<polyline points=${poly(side(innerEdge, d))}/><polyline points=${poly(side(middleEdge, d))}/>`)}
        <polyline points=${poly(side(outerEdge, 1))}/>
        <polyline points="335,0 331,9 329,17 325,44 322,70 319,94 316,153.500 279.500,153.500 279.500,210.500 329,210.500"/>
        <polyline points="329,222.500 280.500,222.500 280.500,256.500 316.500,256.500 319,340 322,364 325,390 329,417 331,425 335,434"/>
        <rect x="290.500" y="210.500" width="9" height="12" fill="#f0f0f0"/>
        <path d="M284.500 256.500v11h-3v36l1 10h25v-46h-3v-11z" fill="#f0f0f0"/>
      </g>
      <path d="M404 19.500h397M404 415.500h397M404.500 19v397M800.500 19v397" fill="none" stroke="#d81e1e"/>
      <path d="M389 217.500h426M602.500 4v426" stroke="#000"/>
      <g fill="#fff" stroke="#000"><rect x="594.500" y="209.500" width="16" height="16"/><rect x="596.500" y="211.500" width="12" height="12"/><rect x="598.500" y="213.500" width="8" height="8"/><rect x="600.500" y="215.500" width="4" height="4"/></g>
    </svg></div>`;
  }

  private renderEditor() {
    return html`<section class="editor">
      <div class="corner"><svg viewBox="0 0 12 12"><path d="M9.500 1v10M1 8.500h10" stroke="#000" stroke-dasharray="1 1"/></svg></div>
      <div class="ruler top"><svg>
        <g stroke="#000" class="crisp">${around(180).map((i) => { const x = Math.round(OX + i * 7.2) + 0.5; return svg`<line x1=${x} x2=${x} y1=${i % 10 === 0 ? 1 : i % 5 === 0 ? 10 : 13} y2="19"/>`; })}</g>
        ${range(-8, 7).map((n) => svg`<text x=${OX + n * 72 + 2} y="12">${n}</text>`)}</svg></div>
      <div class="ruler left"><svg>
        <g stroke="#000" class="crisp">${around(90).map((i) => { const y = Math.round(OY + i * 7.2) + 0.5; return svg`<line y1=${y} y2=${y} x1=${i % 10 === 0 ? 0 : i % 5 === 0 ? 9 : 13} x2="17"/>`; })}</g>
        ${range(-3, 2).map((n) => svg`<text transform="translate(10 ${OY - n * 72 - 1}) rotate(-90)">${n}</text>`)}</svg></div>
      ${this.renderCanvas()}
      <div class="vs"><span class="split"></span><button class="arrow" aria-label="Scroll up"><svg viewBox="0 0 7 7"><path d="M0 5h7L3.500 1z" fill="#333"/></svg></button><span class="fill-a"></span>
        <span class="thumb"><svg viewBox="0 0 9 9"><path d="M1 1.500h7M1 4.500h7M1 7.500h7" stroke="#555"/></svg></span><span class="fill-b"></span>
        <button class="arrow" aria-label="Scroll down"><svg viewBox="0 0 7 7"><path d="M0 2h7L3.500 6z" fill="#333"/></svg></button></div>
      <div class="hs"><span class="hsplit"></span><button class="arrow" aria-label="Scroll left"><svg viewBox="0 0 7 7"><path d="M5 0v7L1 3.500z" fill="#333"/></svg></button><span class="fill-a"></span>
        <span class="thumb"><svg viewBox="0 0 9 9"><path d="M1.500 1v7M4.500 1v7M7.500 1v7" stroke="#555"/></svg></span><span class="fill-b"></span>
        <button class="arrow" aria-label="Scroll right"><svg viewBox="0 0 7 7"><path d="M2 0v7l4-3.500z" fill="#333"/></svg></button></div>
      <div class="size"><svg viewBox="0 0 11 11"><path d="M1 8.500h9M4 5.500h6M7 2.500h3" stroke="#aaa" stroke-width="2" stroke-dasharray="2 1"/></svg></div>
    </section>`;
  }

  private renderPanel() {
    const glyphs: [string, Art][] = [
      ["Move to start", svg`<path d="M2 6h8L6 2zM2 11h8L6 7z"/>`],
      ["Move up", svg`<path d="M1 8h10L6 4z"/>`],
      ["Move down", svg`<path d="M1 5h10L6 9z"/>`],
      ["Move to end", svg`<path d="M2 1h8L6 5zM2 6h8l-4 4z"/>`],
      ["Delete", svg`<path d="M0 1l11 10M11 0L1 11" stroke="#8a8a8a" stroke-width="2"/>`],
    ];
    return html`<aside class="panel">
      <div class="phead"><b>Resequence</b>
        <button aria-label="Pin"><svg width="7" height="10"><path d="M1.500 6V.5h4V6M0 6.500h7M3.500 7v3" fill="none" stroke="#3d4d60"/></svg></button>
        <button aria-label="Close panel"><svg width="9" height="9"><path d="M1 1l7 7M8 1L1 8" stroke="#3d4d60" stroke-width="1.500"/></svg></button></div>
      <div class="heads"><span>Color</span><span>Thread ID</span><span>Obj</span></div>
      <div class="list"><table aria-label="Stitch sequence"><colgroup><col class="c0"><col class="c1"><col><col class="c3"></colgroup>
        <tbody><tr class="lead"><td></td><td></td><td></td><td></td></tr>
        ${Array.from({ length: 8 }, () => html`<tr><td></td><td></td><td></td><td></td></tr>`)}</tbody></table></div>
      <div class="pbtns">${glyphs.map(([l, g]) => html`<button aria-label=${l}><svg width="12" height="12" fill="#8a8a8a">${g}</svg></button>`)}</div>
    </aside>`;
  }

  render() {
    return html`${this.renderTitle()}${this.renderMenu()}${this.renderToolbars()}
      <main class="work">${this.renderEditor()}${this.renderPanel()}</main>
      <div class="bottom">
        <div class="bar">${this.grip}${this.tool("hand", "Select", true)}${this.tool("checklist", "Properties")}${this.sep}${this.tool("flipV", "Flip vertical")}${this.tool("flipH", "Flip horizontal")}${this.tool("rotate", "Rotate")}</div>
        <div class="bar">${this.grip}${this.tool("sortShapes", "Sort", true)}${this.tool("spoolRed", "Thread")}</div>
        <div class="bar">${this.grip}${this.tool("tulips", "Copy design")}${this.tool("hoopAdd", "Add hoop")}${this.tool("hoopRemove", "Remove hoop")}${this.tool("hoopHelp", "Hoop help")}${this.tool("hoopRotate", "Rotate hoop")}</div>
        <div class="bar">${this.grip}${this.tool("hatch", "Hatch")}${this.tool("hatchMove", "Move hatch")}${this.sep}${this.tool("clover", "Combine")}${this.tool("pie", "Split")}${this.tool("tick", "Apply")}</div>
      </div>
      <footer class="status"><span class="cell s0"></span><span class="cell s1">Empty Design</span>
        <span class="cell s2"><svg width="12" height="13"><path d="M0 .5h12M0 12.500h12" stroke="#000" stroke-width="2"/><rect x="2" y="1" width="8" height="11" fill="#e23420" stroke="#000"/></svg>202 Vermilion Janome Polyester</span>
        <span class="cell s3"></span><span class="cell s4">Pure Cotton</span></footer>
      <div class="foot"></div>`;
  }
}
